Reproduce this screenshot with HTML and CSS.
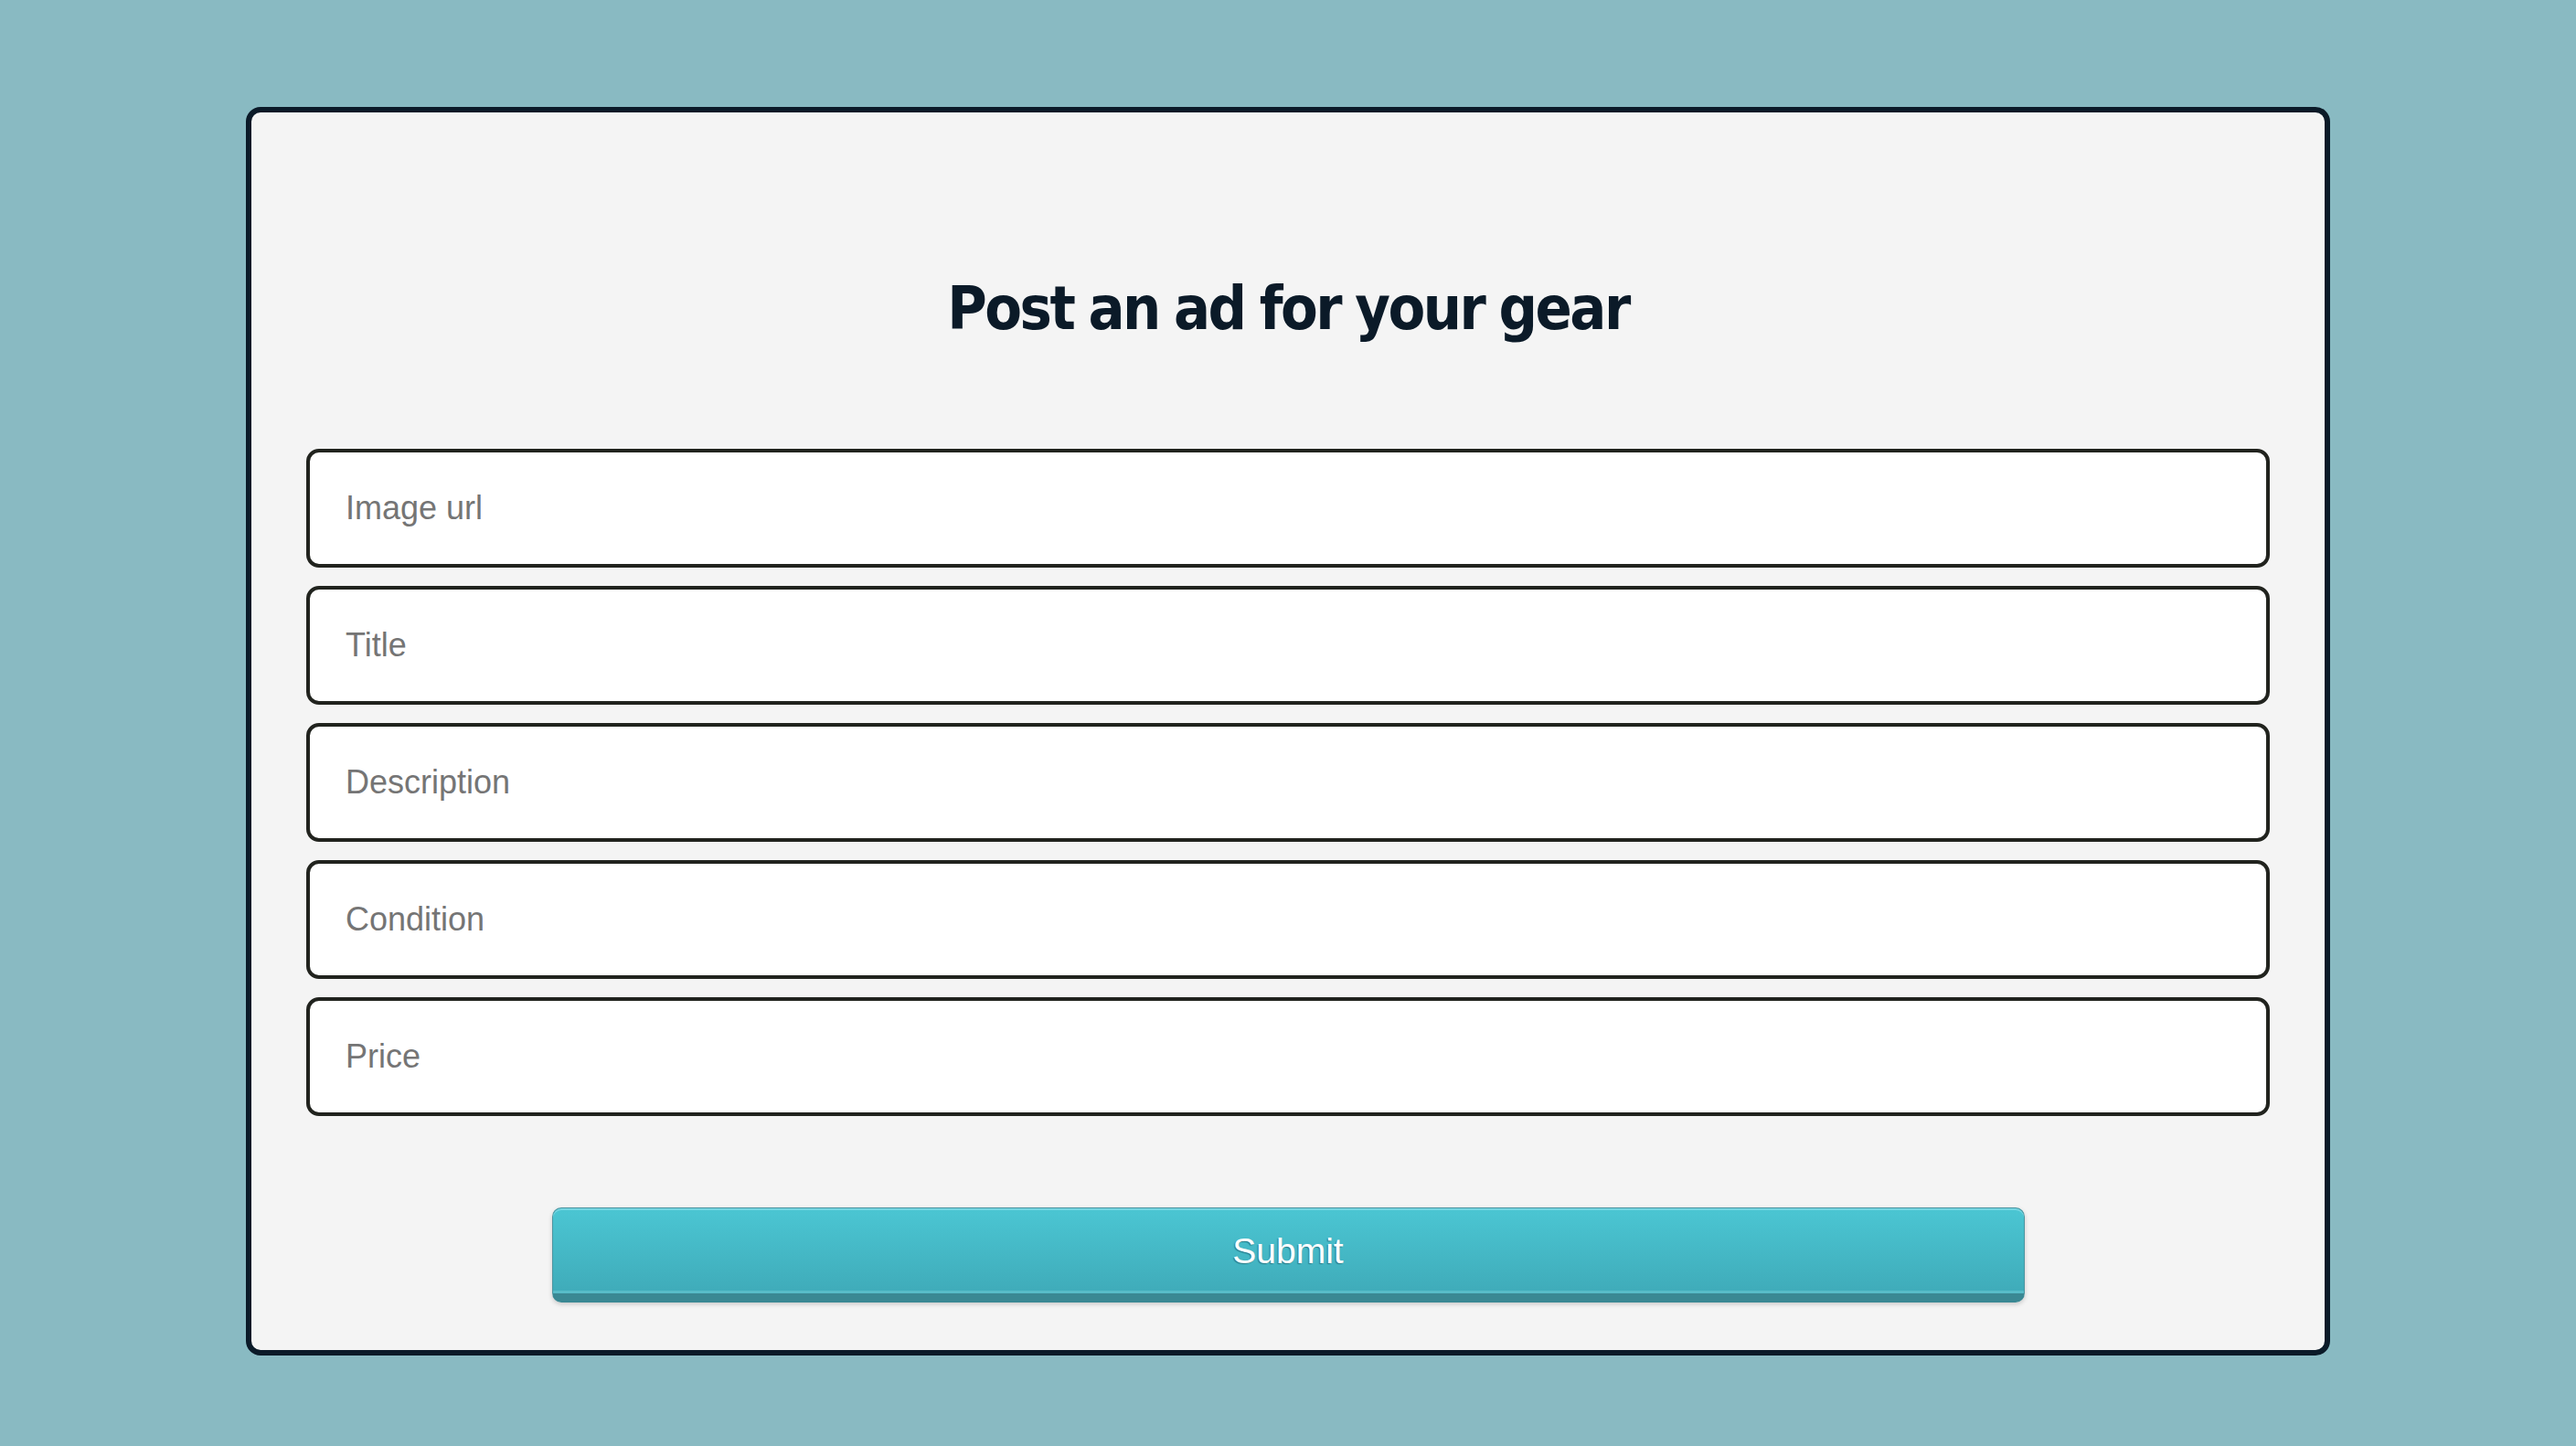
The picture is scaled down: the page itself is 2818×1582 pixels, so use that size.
FILE: index.html
```html
<!DOCTYPE html>
<html lang="en">
<head>
<meta charset="utf-8">
<title>Post an ad</title>
<link rel="stylesheet" href="styles.css">
</head>
<body>
<main class="page">
  <form class="card">
    <h1 class="title">Post an ad for your gear</h1>
    <div class="fields">
      <input class="field" type="text" placeholder="Image url">
      <input class="field" type="text" placeholder="Title">
      <input class="field" type="text" placeholder="Description">
      <input class="field" type="text" placeholder="Condition">
      <input class="field" type="text" placeholder="Price">
    </div>
    <div class="actions">
      <button class="submit" type="button">Submit</button>
    </div>
  </form>
</main>
</body>
</html>
```

FILE: styles.css
```css
html, body {
  margin: 0;
  padding: 0;
}
body {
  background: #89bac2;
  font-family: "Liberation Sans", Arial, sans-serif;
}
.page {
  padding-top: 117px;
}
.card {
  box-sizing: border-box;
  width: 2280px;
  height: 1366px;
  margin: 0 auto;
  background: #f4f4f4;
  border: 6px solid #0b1a28;
  border-radius: 16px;
  padding: 0 60px;
  display: flex;
  flex-direction: column;
}
.title {
  margin: 175px 0 0;
  font-family: "DejaVu Sans Condensed", "Liberation Sans", sans-serif;
  font-weight: bold;
  font-size: 66px;
  line-height: 80px;
  letter-spacing: -2.5px;
  word-spacing: -2px;
  color: #0b1a28;
  text-align: center;
}
.fields {
  margin-top: 113px;
  display: flex;
  flex-direction: column;
  gap: 20px;
}
.field {
  box-sizing: border-box;
  width: 100%;
  height: 130px;
  margin: 0;
  border: 4px solid #21231e;
  border-radius: 14px;
  background: #fff;
  padding: 0 39px;
  font-family: "Liberation Sans", Arial, sans-serif;
  font-size: 36px;
  color: #222;
  outline: none;
}
.field::placeholder {
  color: #757575;
  opacity: 1;
}
.actions {
  margin-top: 100px;
  display: flex;
  justify-content: center;
}
.submit {
  box-sizing: border-box;
  width: 75%;
  height: 104px;
  margin: 0;
  padding: 0;
  border: 1px solid #4a95a0;
  border-bottom: 10px solid #3a8893;
  border-radius: 10px;
  background: linear-gradient(#4bc6d3, #3fabb9);
  box-shadow: inset 0 2px 0 #76d6e2, inset 0 -3px 0 #58bcc8, 0 2px 5px rgba(0, 0, 0, 0.18);
  color: #fff;
  font-family: "Liberation Sans", Arial, sans-serif;
  font-size: 39px;
  text-shadow: -1px 1px 1px #2b7c87;
  cursor: pointer;
}
```
